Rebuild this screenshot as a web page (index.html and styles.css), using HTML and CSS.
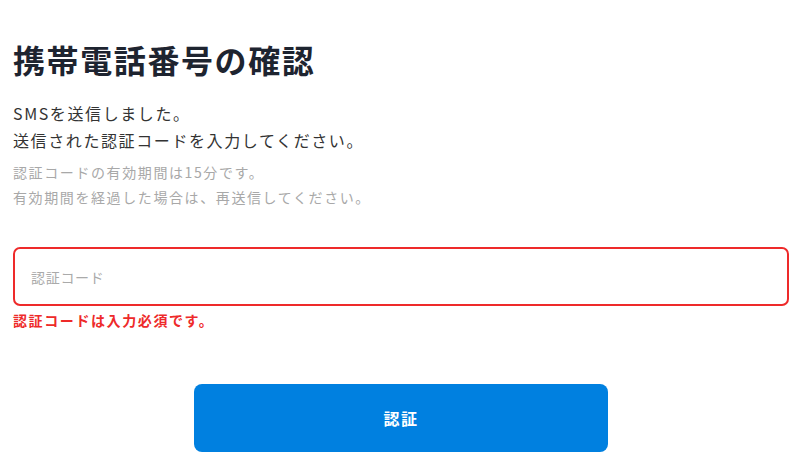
FILE: index.html
```html
<!DOCTYPE html>
<html lang="ja">
<head>
<meta charset="utf-8">
<title>携帯電話番号の確認</title>
<link rel="stylesheet" href="styles.css">
</head>
<body>
<main class="page">
  <h1 class="title">携帯電話番号の確認</h1>
  <p class="lead">SMSを送信しました。<br>送信された認証コードを入力してください。</p>
  <p class="note">認証コードの有効期間は15分です。<br>有効期間を経過した場合は、再送信してください。</p>
  <div class="field">
    <input class="code-input" type="text" placeholder="認証コード">
    <p class="error">認証コードは入力必須です。</p>
  </div>
  <div class="actions">
    <button class="submit" type="button">認証</button>
  </div>
</main>
</body>
</html>
```
FILE: styles.css
```css
* { box-sizing: border-box; }
html, body { margin: 0; padding: 0; background: #fff; }
body {
  font-family: "Noto Sans CJK JP", "Noto Sans", sans-serif;
  color: #333;
  letter-spacing: 0.1em;
}
.page {
  width: 800px;
  padding: 36px 11px 0 13px;
}
.title {
  margin: 0;
  font-size: 32px;
  line-height: 46px;
  font-weight: 700;
  letter-spacing: 0.05em;
  color: #1e2430;
}
.lead {
  margin: 18px 0 0;
  font-size: 16px;
  line-height: 27px;
  color: #333;
}
.lead-sms { letter-spacing: 0.12em; }
.note {
  margin: 6px 0 0;
  font-size: 14px;
  line-height: 25px;
  color: #a8a8a8;
}
.field { margin-top: 37px; }
.code-input {
  display: block;
  width: 100%;
  height: 59px;
  border: 2px solid #ee2a2a;
  border-radius: 7px;
  padding: 0 16px;
  font-family: inherit;
  font-size: 14px;
  letter-spacing: 0.05em;
  color: #333;
  outline: none;
}
.code-input::placeholder { color: #aaa; }
.error {
  margin: 4px 0 0;
  font-size: 14px;
  line-height: 21px;
  font-weight: 700;
  color: #ee2a2a;
}
.actions {
  display: flex;
  justify-content: center;
  margin-top: 53px;
}
.submit {
  width: 414px;
  height: 68px;
  border: 0;
  border-radius: 8px;
  background: #0080e0;
  color: #fff;
  font-family: inherit;
  font-size: 16px;
  font-weight: 700;
  letter-spacing: 0.1em;
}
```
